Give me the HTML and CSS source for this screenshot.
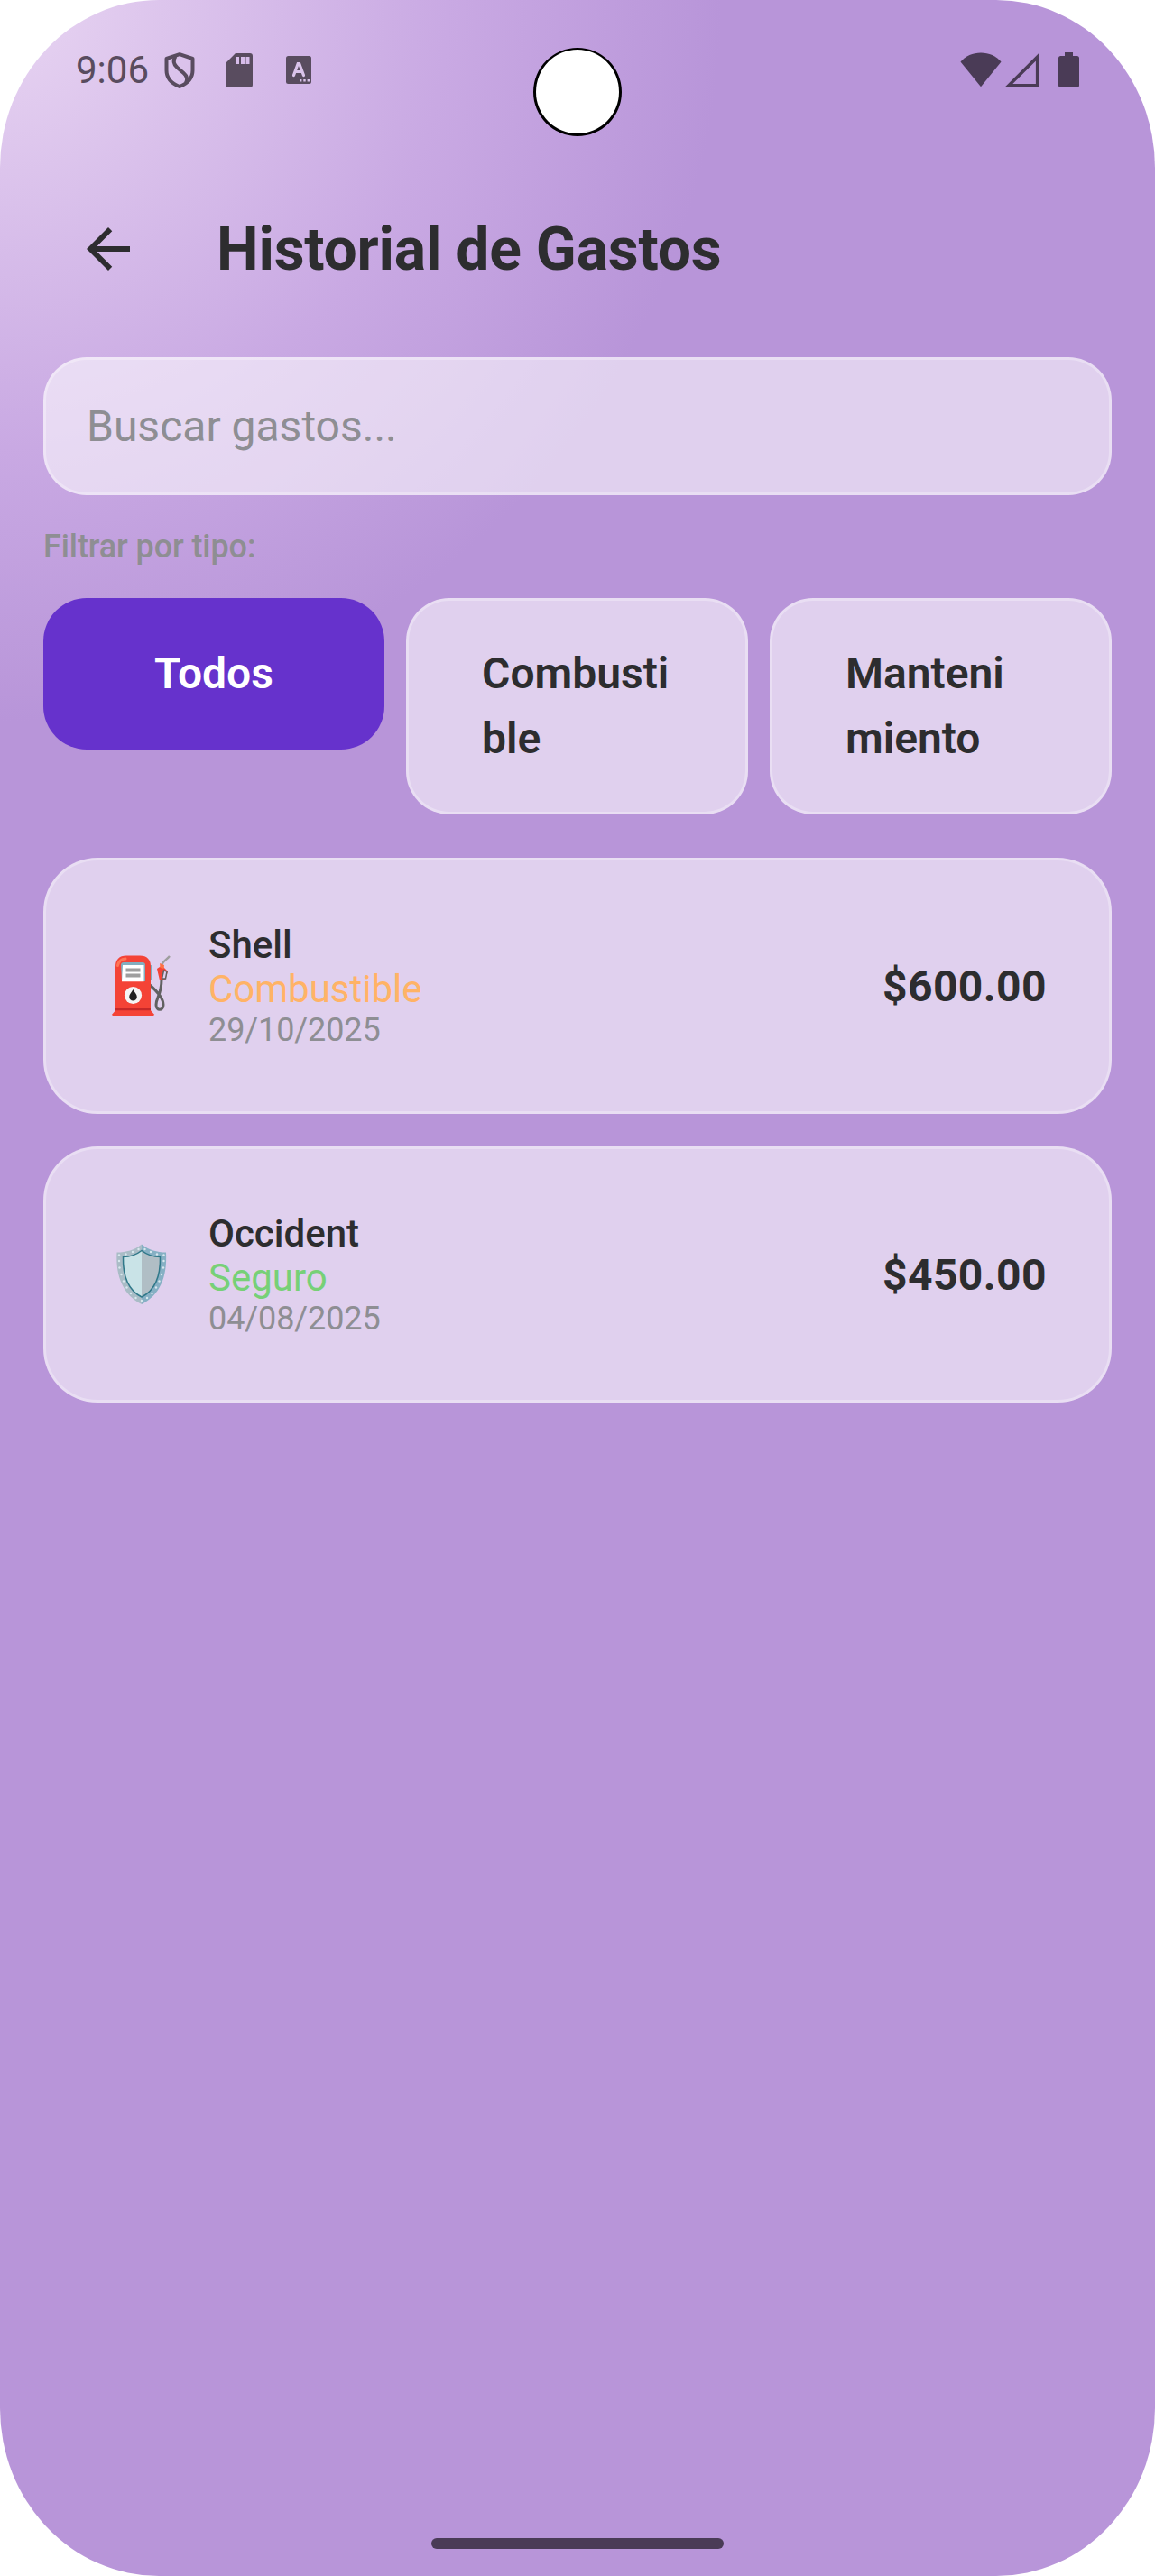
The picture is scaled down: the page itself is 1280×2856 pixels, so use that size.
FILE: index.html
```html
<!DOCTYPE html>
<html lang="es">
<head>
<meta charset="utf-8">
<title>Historial de Gastos</title>
<link rel="stylesheet" href="styles.css">
</head>
<body>
<div class="screen">
  <div class="camera"></div>
  <header class="status">
    <span class="clock">9:06</span>
    <svg class="st-shield" width="34" height="40" viewBox="0 0 34 40" fill="none" stroke="currentColor" stroke-width="4" stroke-linejoin="round"><path d="M17 2.200 31.500 7v13c0 8.500-5.500 14.500-14.500 18C8 34.500 2.500 28.500 2.500 20V7Z"/><path d="M12.500 4.500C9.500 9 10 13 14.500 17l7 6c4 3.500 4.500 7 2.500 11"/></svg>
    <svg class="st-sd" width="30" height="38" viewBox="0 0 30 38" fill="currentColor" fill-rule="evenodd"><path d="M11 0H27a3 3 0 0 1 3 3V35a3 3 0 0 1-3 3H3a3 3 0 0 1-3-3V11ZM11 4v8h4V4ZM17 4v8h4V4ZM22.500 4v8h4V4Z"/></svg>
    <svg class="st-a" width="28" height="31" viewBox="0 0 28 31"><rect width="28" height="31" rx="2.500" fill="currentColor"/><path d="M8.500 21.500 13.200 8.500h1.500L19.500 21.500M10.500 17.500h7" fill="none" stroke="#dac3ea" stroke-width="3.200" stroke-linecap="round"/><path d="M15 26h2.400v2.400H15zM19.300 26h2.400v2.400h-2.400zM23.600 26H26v2.400h-2.400z" fill="#dac3ea"/></svg>
    <div class="signals">
      <svg width="46" height="39" viewBox="0 0 46 39" fill="currentColor"><path d="M.500 10.500C6 4 14 .500 23 .500S40 4 45.500 10.500L23 38.200Z"/></svg>
      <svg class="st-cell" width="38" height="39" viewBox="0 0 38 39" fill="none" stroke="currentColor" stroke-width="3.600"><path d="M4 36.700H35.700V5.200Z"/></svg>
      <svg class="st-bat" width="23" height="39" viewBox="0 0 23 39" fill="currentColor"><path d="M7 0h9v4h4.500A2.500 2.500 0 0 1 23 6.500v30a2.500 2.500 0 0 1-2.500 2.500h-18A2.500 2.500 0 0 1 0 36.500v-30A2.500 2.500 0 0 1 2.500 4H7Z"/></svg>
    </div>
  </header>

  <div class="topbar">
    <svg width="72" height="72" viewBox="0 0 24 24" fill="currentColor"><path d="M20 11H7.830l5.590-5.590L12 4l-8 8 8 8 1.410-1.410L7.830 13H20v-2z"/></svg>
    <h1 class="title">Historial de Gastos</h1>
  </div>

  <main class="content">
    <div class="search glass">Buscar gastos...</div>
    <p class="filter-label">Filtrar por tipo:</p>
    <div class="chips">
      <div class="chip active">Todos</div>
      <div class="chip glass">Combusti<br>ble</div>
      <div class="chip glass">Manteni<br>miento</div>
    </div>

    <article class="card glass">
      <svg class="emoji" width="72" height="72" viewBox="0 0 72 72">
        <path d="M43 34c8 7 15 15 15 22 0 7-8 7-8 0 0-8 6-11 6-28" fill="none" stroke="#616161" stroke-width="3"/>
        <path d="M56 14c0-6 5-7 9-12" fill="none" stroke="#9e9e9e" stroke-width="2.400"/>
        <path d="M42 12h2.500q1.500 0 1.500 2v13q0 2-1.500 2H42z" fill="#82aebf"/>
        <path d="M54 14q3-2 6 2l3 3-3 10h-6l-3-13z" fill="#f44336"/>
        <path d="m54 10 5 2-.5 4-4-1z" fill="#ff7043"/>
        <path d="m58.500 18 3.500 1-1.500 8h-4z" fill="#e0d0ed" stroke="#616161" stroke-width="1.500"/>
        <path d="M5 63V14Q5 1.500 17 1.500h15Q44 1.500 44 14v49z" fill="#f44336"/>
        <path d="M7.500 12.500Q9 5.500 16 5" fill="none" stroke="#ff7555" stroke-width="3" stroke-linecap="round"/>
        <path d="M11 12q0-3 3-3h21q3 0 3 3v18H12z" fill="#82aebf"/>
        <path d="M13 12h23.500v18.300H12z" fill="#fff"/>
        <path d="M16.500 15.500h16v4h-16zM16.500 21.500h16v4h-16z" fill="#9e9e9e"/>
        <circle cx="24.500" cy="45.500" r="9.600" fill="#f5f5f5"/>
        <path d="M24.500 39c2 3.500 4.300 5.500 4.300 8.300a4.300 4.300 0 0 1-8.600 0c0-2.800 2.300-4.800 4.300-8.300z" fill="#212121"/>
        <path d="M5 60h39v3H5z" fill="#c62828"/>
        <path d="M5 62.300h39l3.500 4v1.700h-46v-1.700z" fill="#f44336"/>
      </svg>
      <div class="info">
        <div class="name">Shell</div>
        <div class="type fuel">Combustible</div>
        <div class="date">29/10/2025</div>
      </div>
      <div class="amount">$600.00</div>
    </article>

    <article class="card glass">
      <svg class="emoji" width="72" height="72" viewBox="0 0 72 72">
        <path d="M34 1.500C26 8 17 10.500 6.500 10.500 5 38 14 58 34 68z" fill="#a9bcc6"/>
        <path d="M34 1.500c8 6.500 17 9 27 9C62.500 38 54 58 34 68z" fill="#86b0c4"/>
        <path d="M34 8.500C27 14 20 15.500 13.500 15.500 13 37 20 53 34 60z" fill="#c9e3e7"/>
        <path d="M34 8.500c7 5.500 14 7 20.500 7C55 37 48 53 34 60z" fill="#b0bec5"/>
        <path d="M34 8.500C27 14 20 15.500 13.500 15.500 13 37 20 53 34 60c14-7 21-23 20.500-44.500C48 15.500 41 14 34 8.500z" fill="none" stroke="#2f7889" stroke-width="1.500"/>
        <g fill="#d8e8ee"><circle cx="9" cy="13.500" r="1.200"/><circle cx="16.500" cy="12.500" r="1.200"/><circle cx="24" cy="10" r="1.200"/><circle cx="30.500" cy="7" r="1.200"/><circle cx="37.500" cy="7" r="1.200"/><circle cx="44" cy="10" r="1.200"/><circle cx="51" cy="12.500" r="1.200"/><circle cx="58.500" cy="13.500" r="1.200"/><circle cx="9" cy="20" r="1.200"/><circle cx="9.500" cy="27.500" r="1.200"/><circle cx="11.500" cy="35" r="1.200"/><circle cx="14" cy="42.500" r="1.200"/><circle cx="17.500" cy="49.500" r="1.200"/><circle cx="22" cy="56" r="1.200"/><circle cx="27.500" cy="61" r="1.200"/><circle cx="34" cy="64" r="1.200"/><circle cx="40" cy="61" r="1.200"/><circle cx="45.500" cy="56" r="1.200"/><circle cx="50" cy="49.500" r="1.200"/><circle cx="53.500" cy="42.500" r="1.200"/><circle cx="56" cy="35" r="1.200"/><circle cx="58" cy="27.500" r="1.200"/><circle cx="58.500" cy="20" r="1.200"/></g>
      </svg>
      <div class="info">
        <div class="name">Occident</div>
        <div class="type insurance">Seguro</div>
        <div class="date">04/08/2025</div>
      </div>
      <div class="amount">$450.00</div>
    </article>
  </main>
  <div class="home-bar"></div>
</div>
</body>
</html>
```
FILE: styles.css
```css
* { box-sizing: border-box; }
body { margin: 0; background: #fff; font-family: Roboto, sans-serif; color: #2d2d2f; }
.screen {
  position: relative;
  display: flex;
  flex-direction: column;
  width: 1280px;
  height: 2856px;
  overflow: hidden;
  border-radius: 176px / 186px;
  background: radial-gradient(circle 800px at 0 0, #e8d5f2 0%, #c9a9e3 62%, #b895d9 100%);
}
.camera {
  position: absolute;
  left: 591px;
  top: 53px;
  width: 98px;
  height: 98px;
  border-radius: 50%;
  border: solid #000;
  border-width: 2px 3px 3px;
  background: #fff;
}
.status {
  display: flex;
  align-items: flex-start;
  height: 156px;
  padding: 58px 84px 0;
  color: #594c5f;
}
.clock { width: 98px; font-size: 42px; line-height: 39px; }
.st-sd { margin: 1px 0 0 34px; }
.st-a { margin: 4px 0 0 37px; }
.signals { display: flex; margin-left: auto; color: #4a3b56; }
.st-cell { margin-left: 4px; }
.st-bat { margin-left: 21px; }
.topbar {
  display: flex;
  align-items: center;
  height: 240px;
  padding: 0 84px;
}
.title { margin: 2px 0 0 84px; font-size: 66px; font-weight: 700; line-height: 84px; letter-spacing: -.22px; }
.content { display: flex; flex-direction: column; padding: 0 48px; }
.glass { background: rgba(255,255,255,.56); border: 3px solid rgba(255,255,255,.3); }
.search {
  height: 153px;
  padding: 0 45px;
  border-radius: 48px;
  font-size: 48px;
  line-height: 147px;
  color: #8e8e93;
}
.filter-label { margin: 30px 0; font-size: 36px; font-weight: 500; line-height: 54px; letter-spacing: -.1px; color: #8e8e93; }
.chips { display: grid; grid-template-columns: 378px 379px 379px; gap: 24px; align-items: start; }
.chip {
  padding: 45px 81px;
  border-radius: 48px;
  font-size: 48px;
  font-weight: 600;
  line-height: 72px;
}
.chip.active { padding: 48px 84px; background: #6632cc; color: #fff; text-align: center; }
.card {
  display: flex;
  align-items: center;
  height: 284px;
  margin-top: 36px;
  padding: 0 69px;
  border-radius: 60px;
}
.chips + .card { margin-top: 48px; }
.emoji { margin: 2px 0 0 3px; }
.info { margin-left: 36px; }
.name, .type { font-size: 42px; line-height: 49px; }
.name { font-weight: 500; }
.date { font-size: 36px; line-height: 42px; letter-spacing: -.1px; color: #8e8e93; }
.fuel { color: #ffb366; }
.insurance { color: #77d077; }
.amount { margin-left: auto; font-size: 48px; font-weight: 700; letter-spacing: .4px; }
.home-bar {
  width: 324px;
  height: 12px;
  margin: auto auto 30px;
  border-radius: 6px;
  background: #4a3b56;
}
```
